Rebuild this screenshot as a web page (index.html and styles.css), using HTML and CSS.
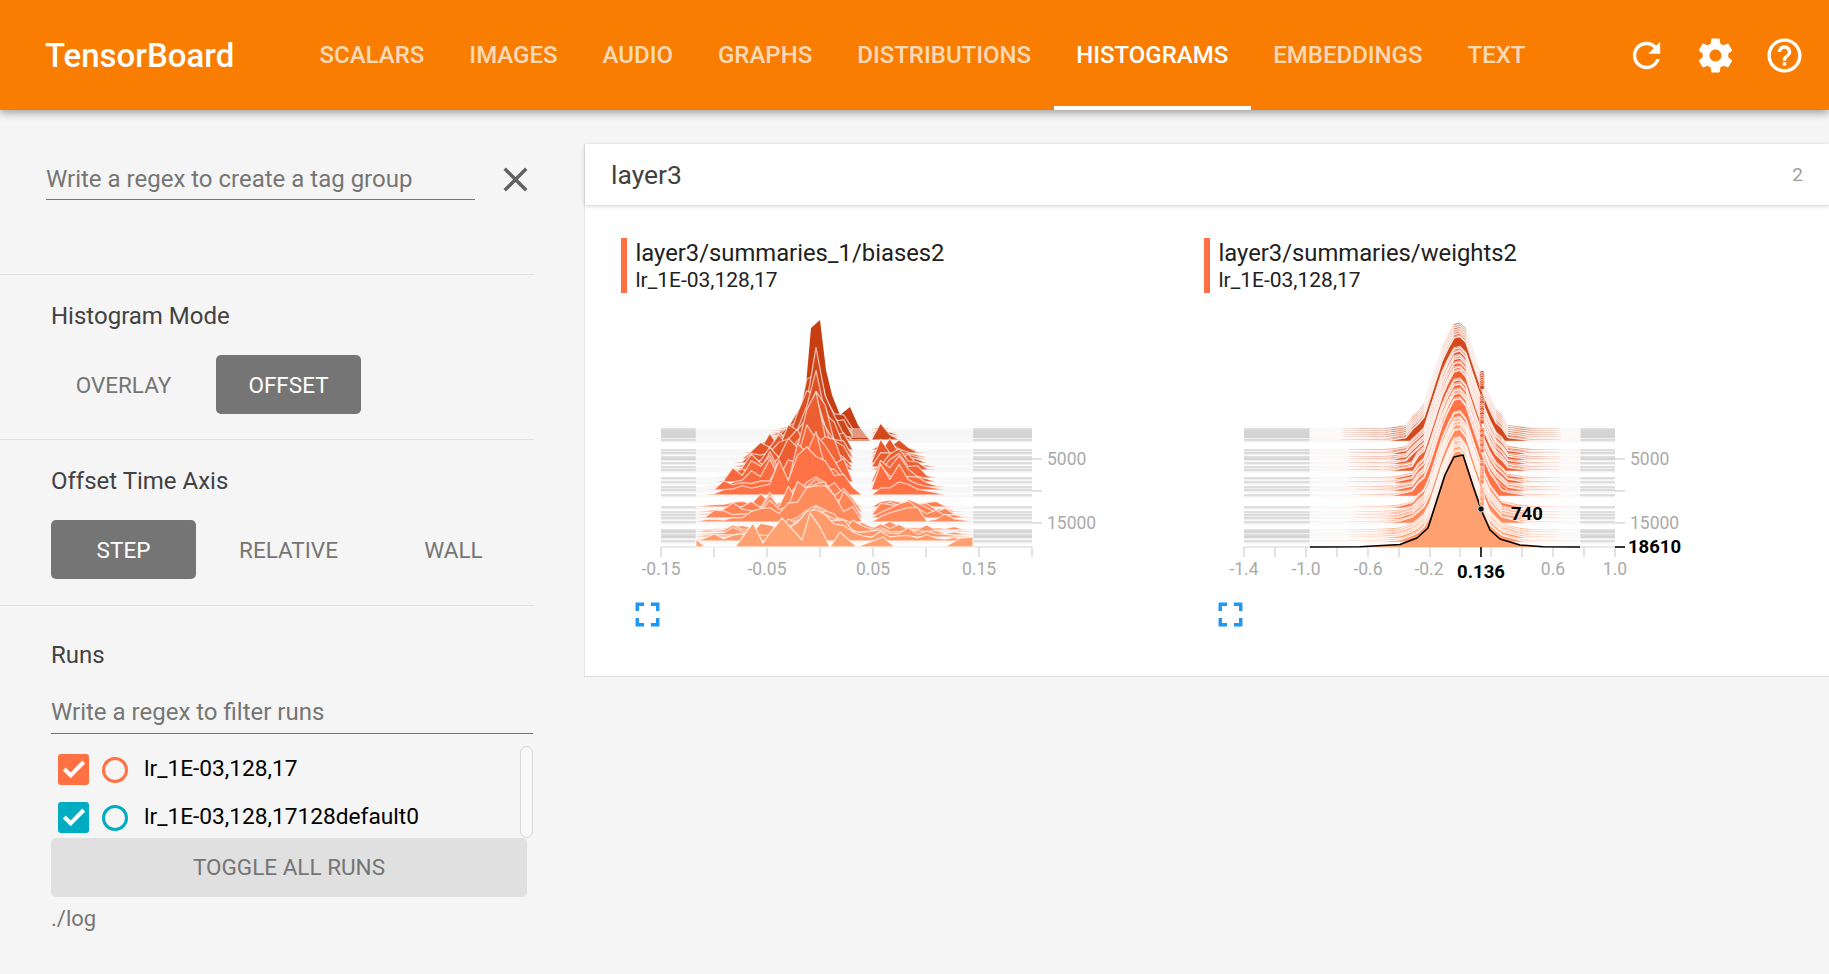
FILE: index.html
```html
<!DOCTYPE html>
<html lang="en">
<head>
<meta charset="utf-8">
<title>TensorBoard</title>
<link rel="stylesheet" href="styles.css">
</head>
<body>
<header class="topbar">
  <div class="brand">TensorBoard</div>
  <nav class="tabs">
    <a class="tab">SCALARS</a>
    <a class="tab">IMAGES</a>
    <a class="tab">AUDIO</a>
    <a class="tab">GRAPHS</a>
    <a class="tab">DISTRIBUTIONS</a>
    <a class="tab tab-active">HISTOGRAMS</a>
    <a class="tab">EMBEDDINGS</a>
    <a class="tab">TEXT</a>
  </nav>
  <div class="actions">
    <svg class="icon" viewBox="0 0 24 24"><path d="M17.65 6.35C16.2 4.9 14.21 4 12 4c-4.42 0-7.99 3.58-7.99 8s3.57 8 7.99 8c3.73 0 6.84-2.55 7.73-6h-2.08c-.82 2.33-3.04 4-5.65 4-3.31 0-6-2.69-6-6s2.69-6 6-6c1.66 0 3.14.69 4.22 1.78L13 11h7V4l-2.35 2.35z"/></svg>
    <svg class="icon" viewBox="0 0 24 24"><path d="M19.43 12.98c.04-.32.07-.64.07-.98s-.03-.66-.07-.98l2.11-1.65c.19-.15.24-.42.12-.64l-2-3.46c-.12-.22-.39-.3-.61-.22l-2.49 1c-.52-.4-1.08-.73-1.69-.98l-.38-2.65C14.46 2.18 14.25 2 14 2h-4c-.25 0-.46.18-.49.42l-.38 2.65c-.61.25-1.17.59-1.69.98l-2.49-1c-.23-.09-.49 0-.61.22l-2 3.46c-.13.22-.07.49.12.64l2.11 1.65c-.04.32-.07.65-.07.98s.03.66.07.98l-2.11 1.65c-.19.15-.24.42-.12.64l2 3.46c.12.22.39.3.61.22l2.49-1c.52.4 1.08.73 1.69.98l.38 2.65c.03.24.24.42.49.42h4c.25 0 .46-.18.49-.42l.38-2.65c.61-.25 1.17-.59 1.69-.98l2.49 1c.23.09.49 0 .61-.22l2-3.46c.12-.22.07-.49-.12-.64l-2.11-1.65zM12 15.5c-1.93 0-3.5-1.57-3.5-3.5s1.57-3.5 3.5-3.5 3.5 1.57 3.5 3.5-1.57 3.5-3.5 3.5z"/></svg>
    <svg class="icon" viewBox="0 0 24 24"><path d="M11 18h2v-2h-2v2zm1-16C6.48 2 2 6.48 2 12s4.48 10 10 10 10-4.48 10-10S17.52 2 12 2zm0 18c-4.41 0-8-3.59-8-8s3.59-8 8-8 8 3.59 8 8-3.59 8-8 8zm0-14c-2.21 0-4 1.79-4 4h2c0-1.1.9-2 2-2s2 .9 2 2c0 2-3 1.75-3 5h2c0-2.25 3-2.5 3-5 0-2.21-1.79-4-4-4z"/></svg>
  </div>
</header>

<div class="page">
  <aside class="sidebar">
    <section class="sec sec-search">
      <div class="regex">
        <div class="field field-tag">Write a regex to create a tag group</div>
        <svg class="close" viewBox="0 0 24 24"><path d="M19 6.41L17.59 5 12 10.59 6.41 5 5 6.41 10.59 12 5 17.59 6.41 19 12 13.41 17.59 19 19 17.59 13.41 12z"/></svg>
      </div>
    </section>
    <section class="sec sec-opt sec-mode">
      <h3 class="sec-title">Histogram Mode</h3>
      <div class="btn-row">
        <div class="btn">OVERLAY</div>
        <div class="btn btn-on">OFFSET</div>
      </div>
    </section>
    <section class="sec sec-opt sec-axis">
      <h3 class="sec-title">Offset Time Axis</h3>
      <div class="btn-row">
        <div class="btn btn-on">STEP</div>
        <div class="btn">RELATIVE</div>
        <div class="btn">WALL</div>
      </div>
    </section>
    <section class="runs">
      <h3 class="sec-title">Runs</h3>
      <div class="field field-runs">Write a regex to filter runs</div>
      <div class="run-list">
        <div class="run">
          <span class="check check-orange"><svg viewBox="0 0 24 24"><path d="M9.5 18.2L3.6 12.4l2.2-2.2 3.7 3.6 8.7-8.9 2.2 2.2z"/></svg></span>
          <span class="radio radio-orange"></span>
          <span class="run-name">lr_1E-03,128,17</span>
        </div>
        <div class="run">
          <span class="check check-teal"><svg viewBox="0 0 24 24"><path d="M9.5 18.2L3.6 12.4l2.2-2.2 3.7 3.6 8.7-8.9 2.2 2.2z"/></svg></span>
          <span class="radio radio-teal"></span>
          <span class="run-name">lr_1E-03,128,17128default0</span>
        </div>
        <div class="thumb"></div>
      </div>
      <div class="toggle">TOGGLE ALL RUNS</div>
      <div class="logdir">./log</div>
    </section>
  </aside>

  <main class="content">
    <div class="card">
      <div class="card-head">
        <span class="card-title">layer3</span>
        <span class="card-count">2</span>
      </div>
      <div class="card-body">
        <article class="tile">
          <div class="tile-head">
            <div class="tile-tag">layer3/summaries_1/biases2</div>
            <div class="tile-run">lr_1E-03,128,17</div>
          </div>
          <svg class="chart" id="chart-biases" viewBox="0 0 560 290"></svg>
          <svg class="expand" viewBox="0 0 24 24"><path d="M7 14H5v5h5v-2H7v-3zm-2-4h2V7h3V5H5v5zm12 7h-3v2h5v-5h-2v3zM14 5v2h3v3h2V5h-5z"/></svg>
        </article>
        <article class="tile">
          <div class="tile-head">
            <div class="tile-tag">layer3/summaries/weights2</div>
            <div class="tile-run">lr_1E-03,128,17</div>
          </div>
          <svg class="chart" id="chart-weights" viewBox="0 0 560 290"></svg>
          <svg class="expand" viewBox="0 0 24 24"><path d="M7 14H5v5h5v-2H7v-3zm-2-4h2V7h3V5H5v5zm12 7h-3v2h5v-5h-2v3zM14 5v2h3v3h2V5h-5z"/></svg>
        </article>
      </div>
    </div>
  </main>
</div>
<script src="script.js"></script>
</body>
</html>
```

FILE: styles.css
```css
* { box-sizing: border-box; }
html, body { margin: 0; height: 974px; overflow: hidden; }
body { background: #f5f5f5; font-family: Roboto, "Liberation Sans", sans-serif; color: #424242; }

.topbar {
  position: relative; z-index: 2;
  height: 110px; background: #f97d00; color: #fff;
  display: flex; align-items: center; padding-left: 45px;
  box-shadow: 0 3px 8px rgba(0,0,0,.35);
}
.brand { width: 252px; font-size: 33px; font-weight: 500; }
.tabs { display: flex; height: 110px; flex: 1; }
.tab {
  display: flex; align-items: center; padding: 0 22.5px;
  font-size: 24px; font-weight: 500; color: rgba(255,255,255,.72);
  border-bottom: 4px solid transparent; border-top: 4px solid transparent;
}
.tab-active { color: #fff; border-bottom-color: #fff; }
.actions { display: flex; gap: 28px; padding-right: 24px; }
.icon { width: 41px; height: 41px; fill: #fff; }

.page { display: flex; height: 864px; }
.sidebar { width: 534px; flex: none; }
.sec { border-bottom: 1px solid #e0e0e0; }
.sec-search { height: 165px; padding: 46px 0 0 46px; }
.regex { display: flex; align-items: flex-start; }
.field { font-size: 24px; color: #757575; border-bottom: 1.5px solid #757575; }
.field-tag { width: 429px; min-width: 429px; height: 44px; line-height: 46px; }
.close { width: 41px; height: 41px; flex: none; fill: #616161; margin: 3px 0 0 20px; }
.sec-opt { padding: 25px 0 0 51px; }
.sec-mode { height: 165px; }
.sec-axis { height: 166px; }
.sec-title { margin: 0; font-size: 24px; font-weight: 400; line-height: 32px; color: #424242; }
.btn-row { display: flex; gap: 20px; margin-top: 23px; }
.btn {
  width: 145px; height: 59px; border-radius: 5px;
  display: flex; align-items: center; justify-content: center;
  font-size: 22.5px; color: #757575;
}
.btn-on { background: #757575; color: #fff; }
.runs { padding: 33px 0 0 51px; }
.field-runs { margin-top: 21px; width: 482px; height: 42px; line-height: 40px; }
.run-list { position: relative; height: 103.5px; padding-top: 11.5px; width: 482px; }
.run { display: flex; align-items: center; height: 48px; padding-left: 7px; }
.check { width: 31px; height: 31px; border-radius: 3px; display: flex; align-items: center; justify-content: center; }
.check svg { width: 32px; height: 32px; flex: none; fill: #fff; }
.check-orange { background: #ff7043; }
.check-teal { background: #00acc1; }
.radio { width: 26px; height: 26px; margin: 0 17px 0 13px; border-radius: 50%; border: 3px solid; }
.radio-orange { border-color: #ff7043; }
.radio-teal { border-color: #00acc1; }
.run-name { font-size: 22.7px; color: #000; position: relative; top: -1px; left: -1px; }
.thumb {
  position: absolute; right: 0; top: 11.5px; width: 13px; height: 92px;
  background: #f8f8f8; border: 1.5px solid #d8d8d8; border-radius: 7px;
}
.toggle {
  width: 476px; height: 59px; background: #e0e0e0; border-radius: 5px;
  display: flex; align-items: center; justify-content: center;
  font-size: 22.5px; color: #757575;
}
.logdir { margin-top: 8px; font-size: 22px; line-height: 28px; color: #757575; }

.content { flex: 1; padding: 34px 0 0 50px; min-width: 0; }
.card { background: #fff; height: 533px; border-left: 1px solid #e6e6e6; border-bottom: 1px solid #dcdcdc; }
.card-head {
  height: 61px; display: flex; align-items: center; justify-content: space-between;
  padding: 0 26px 0 26px; background: #fff;
  box-shadow: 0 1px 4px rgba(0,0,0,.2);
}
.card-title { font-size: 26.5px; color: #424242; }
.card-count { font-size: 19px; color: #9e9e9e; }
.card-body { display: flex; padding: 33px 0 0 36px; }
.tile { width: 583px; flex: none; }
.tile-head { border-left: 6px solid #ff7043; padding: 0 0 0 8.5px; height: 55px; }
.tile-tag { font-size: 23.8px; line-height: 30px; color: #212121; }
.tile-run { font-size: 21px; line-height: 24px; color: #212121; }
.chart { display: block; width: 560px; height: 290px; margin-top: 7px; font-family: Roboto, "Liberation Sans", sans-serif; }
.chart-tick { font-size: 17.5px; fill: #aaa; }
.chart-hover { font-size: 18.5px; font-weight: 700; fill: #000; }
.expand { display: block; width: 41px; height: 41px; fill: #2196f3; margin: 3.5px 0 0 6px; }
```

FILE: script.js
```js
(function () {
  var NS = "http://www.w3.org/2000/svg";
  var OY = 300;
  var ROWS = [429,431,433,435,437,440, 450,453,457,459,463,467,470,478,482,487,490,495, 507,512,515,518,522, 530,532,535,537,541, 547];

  function el(parent, name, attrs, text) {
    var n = document.createElementNS(NS, name);
    for (var k in attrs) n.setAttribute(k, attrs[k]);
    if (text !== undefined) n.textContent = text;
    parent.appendChild(n);
    return n;
  }
  function lerp(a, b, t) { return a + (b - a) * t; }
  function table(pts, x) {
    if (x <= pts[0][0]) return pts[0][1];
    for (var i = 1; i < pts.length; i++) {
      if (x <= pts[i][0]) {
        return lerp(pts[i-1][1], pts[i][1], (x - pts[i-1][0]) / (pts[i][0] - pts[i-1][0]));
      }
    }
    return pts[pts.length-1][1];
  }
  function hex(c) { return "rgb(" + c.map(Math.round).join(",") + ")"; }
  function color(t) {
    var a = [198,62,18], b = [255,112,67], c = [255,160,112];
    var p = t < .55 ? [a, b, t / .55] : [b, c, (t - .55) / .45];
    return hex([0,1,2].map(function (i) { return lerp(p[0][i], p[1][i], p[2]); }));
  }
  var seed = 7;
  function rnd() { seed = (seed * 16807) % 2147483647; return (seed % 10000) / 10000; }

  function axes(svg, x0, x1, inner0, inner1, rows, ox, xticks, xlabels) {
    rows.forEach(function (y) {
      if (y === 547) return;
      [y, y + 1.6].forEach(function (ly, j) {
        var o = j ? .06 : .17;
        el(svg, "line", {x1: x0-ox, x2: inner0-ox, y1: ly-OY, y2: ly-OY, stroke: "#000", "stroke-opacity": o, "stroke-width": 1.6});
        el(svg, "line", {x1: inner1-ox, x2: x1-ox, y1: ly-OY, y2: ly-OY, stroke: "#000", "stroke-opacity": o, "stroke-width": 1.6});
        el(svg, "line", {x1: inner0-ox, x2: inner1-ox, y1: ly-OY, y2: ly-OY, stroke: "#000", "stroke-opacity": j ? .03 : .06, "stroke-width": 1.6});
      });
    });
    el(svg, "line", {x1: x0-ox, x2: x1-ox, y1: 547-OY, y2: 547-OY, stroke: "#d4d4d4"});
    for (var i = 0; i <= xticks; i++) {
      var tx = Math.round(lerp(x0, x1, i / xticks)) - ox;
      el(svg, "line", {x1: tx, x2: tx, y1: 547-OY, y2: 557-OY, stroke: "#d0d0d0", "stroke-width": 1.2});
    }
    xlabels.forEach(function (l) {
      el(svg, "text", {"class": "chart-tick", x: l[1]-ox, y: 575-OY, "text-anchor": "middle"}, l[0]);
    });
    [[459,"5000"],[491,""],[523,"15000"]].forEach(function (r) {
      el(svg, "line", {x1: x1-ox, x2: x1+10-ox, y1: r[0]-OY, y2: r[0]-OY, stroke: "#d0d0d0", "stroke-width": 1.2});
      if (r[1]) el(svg, "text", {"class": "chart-tick", x: x1+15-ox, y: r[0]+6-OY}, r[1]);
    });
  }
  function areaPath(pts, base, ox) {
    var d = "M" + (pts[0][0]-ox) + " " + (base-OY);
    pts.forEach(function (p) { d += "L" + (p[0]-ox).toFixed(1) + " " + (base-p[1]-OY).toFixed(1); });
    return d + "L" + (pts[pts.length-1][0]-ox) + " " + (base-OY) + "Z";
  }
  function drawLayer(svg, pts, base, t, ox, sw, so) {
    el(svg, "path", {d: areaPath(pts, base, ox), fill: color(t), stroke: "#fff", "stroke-opacity": so, "stroke-width": sw, "stroke-linejoin": "round"});
  }

  function biases(svg) {
    var ox = 621;
    axes(svg, 661, 1032, 696, 973, ROWS, ox, 7,
      [["-0.15",661],["-0.05",767],["0.05",873],["0.15",979]]);
    var top = [[775,0],[790,11],[800,26],[806,56],[811,113],[820,121],[826,71],[832,46],[840,26],[850,34],[858,16],[870,0]];
    var amp = [[427,70],[441,86],[455,66],[470,48],[495,30],[507,30],[522,30],[530,18],[541,22]];
    var sig = [[427,11],[470,16],[500,22],[547,26]];
    var broad = [[427,14],[455,24],[490,30],[495,30],[507,15],[522,22],[530,11],[541,15]];
    var xmin = [[427,780],[441,772],[455,746],[470,735],[482,717],[495,708],[512,696],[547,696]];
    var xmax = [[427,880],[441,905],[455,923],[495,943],[522,972],[547,973]];

    drawLayer(svg, top, 441, 0, ox, 0, 0);
    ROWS.slice(0, -1).forEach(function (y) {
      var t = (y - 427) / 120, pts = [];
      var lo = table(xmin, y), hi = table(xmax, y);
      var A = table(amp, y), S = table(sig, y), B = table(broad, y);
      for (var x = 696; x <= 973; x += 9.23) {
        var h = 0;
        if (x > lo && x < hi) {
          var edge = Math.min(1, (x - lo) / 18, (hi - x) / 18);
          var g = Math.exp(-Math.pow((x - 815) / S, 2));
          h = A * g * (.5 + .5 * rnd());
          var side = .85 * Math.exp(-Math.pow((x - 800) / 70, 2)) + .45 * Math.exp(-Math.pow((x - 900) / 40, 2)) + .2;
          var r = rnd();
          h += B * side * (.3 + .95 * r * r) * edge;
          if (y < 495 && x > 850 && x < 872) h = 0;
          else if (y < 523 && x > 858 && x < 880) h = 0;
          if (rnd() < .07) h *= .3;
        }
        pts.push([x, h]);
      }
      drawLayer(svg, pts, y, t, ox, 1.3, .62);
    });
    var last = [[696,8],[705,0],[735,0],[753,24],[763,4],[770,14],[782,29],[802,7],[810,34],[820,20],[830,0],[840,15],[857,0],[883,10],[895,0],[945,0],[960,9],[973,10]];
    drawLayer(svg, last, 547, 1, ox, 1.3, .7);
  }

  function weights(svg) {
    var ox = 1204;
    axes(svg, 1244, 1615, 1310, 1580, ROWS, ox, 12,
      [["-1.4",1244],["-1.0",1306],["-0.6",1368],["-0.2",1429],["0.6",1553],["1.0",1615]]);
    var shape = [[1310,0],[1360,.2],[1400,2.5],[1417,9],[1428,19],[1445,72],[1454,90],[1463,92],[1473,61],[1482,35],[1490,17],[1500,8],[1520,2],[1543,.3],[1580,0]];
    var dots = [];
    var rows = [];
    ROWS.slice(0, -1).forEach(function (y) {
      rows.push(y);
      rows.push(y + 1.4);
    });
    rows.push(547);
    rows.forEach(function (y, i) {
      var t = (y - 427) / 120;
      var scale = lerp(1.17, 1, t);
      var spread = lerp(1.18, 1, t);
      var tailKeep = lerp(.45, 1, t * t);
      var pts = [];
      for (var x = 1310; x <= 1580; x += 6) {
        var s = table(shape, 1458 + (x - 1458) / spread);
        pts.push([x, (s < 9 ? s * tailKeep : s) * scale]);
      }
      pts.push([1580, 0]);
      if (y === 547) {
        el(svg, "path", {d: areaPath(shape, 547, ox), fill: color(1)});
        var line = shape.map(function (p, j) { return (j ? "L" : "M") + (p[0]-ox) + " " + (547-p[1]-OY); }).join("");
        el(svg, "path", {d: line, fill: "none", stroke: "#000", "stroke-width": 1.6, "stroke-linejoin": "round"});
      } else {
        drawLayer(svg, pts, y, t, ox, i % 2 ? 1.5 : 1.1, i % 2 ? .85 : .55);
        dots.push([y - table(shape, 1458 + 23 / spread) * scale - OY, color(t)]);
      }
    });
    dots.forEach(function (d) {
      el(svg, "circle", {cx: 1482-ox, cy: d[0], r: 2.4, fill: d[1], stroke: "#fff", "stroke-opacity": .7, "stroke-width": .8});
    });
    el(svg, "circle", {cx: 1481-ox, cy: 509-OY, r: 3.2, fill: "#111", stroke: "#fff", "stroke-width": .8});
    el(svg, "line", {x1: 1481-ox, x2: 1481-ox, y1: 547-OY, y2: 557-OY, stroke: "#000", "stroke-width": 1.6});
    el(svg, "line", {x1: 1615-ox, x2: 1625-ox, y1: 547-OY, y2: 547-OY, stroke: "#000", "stroke-width": 1.6});
    el(svg, "text", {"class": "chart-hover", x: 1511-ox, y: 520-OY}, "740");
    el(svg, "text", {"class": "chart-hover", x: 1628-ox, y: 553-OY}, "18610");
    el(svg, "text", {"class": "chart-hover", x: 1481-ox, y: 578-OY, "text-anchor": "middle"}, "0.136");
  }

  biases(document.getElementById("chart-biases"));
  weights(document.getElementById("chart-weights"));
})();
```
